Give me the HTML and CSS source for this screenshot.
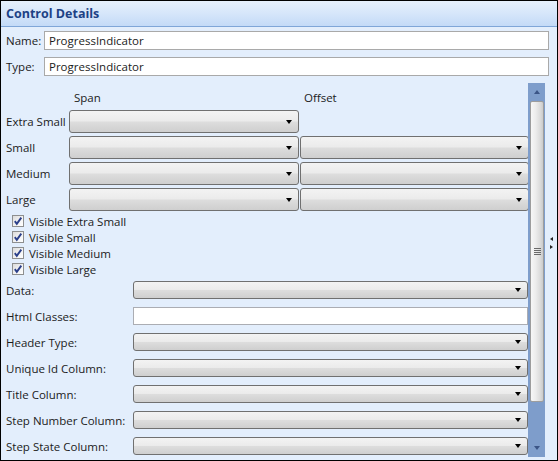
FILE: index.html
```html
<!DOCTYPE html>
<html>
<head>
<meta charset="utf-8">
<link rel="stylesheet" href="styles.css">
</head>
<body>
<div class="window">
  <div class="header"><span class="title">Control Details</span></div>
  <div class="top">
    <div class="trow"><span class="tlabel">Name:</span><div class="textbox">ProgressIndicator</div></div>
    <div class="trow"><span class="tlabel">Type:</span><div class="textbox">ProgressIndicator</div></div>
  </div>
  <div class="scrollarea">
    <div class="content">
      <div class="grid">
        <div class="colhead"></div><div class="colhead span">Span</div><div class="colhead off">Offset</div>
        <div class="glabel">Extra Small</div><div class="combo"><span class="arrow"></span></div><div></div>
        <div class="glabel">Small</div><div class="combo"><span class="arrow"></span></div><div class="combo"><span class="arrow"></span></div>
        <div class="glabel">Medium</div><div class="combo"><span class="arrow"></span></div><div class="combo"><span class="arrow"></span></div>
        <div class="glabel">Large</div><div class="combo"><span class="arrow"></span></div><div class="combo"><span class="arrow"></span></div>
      </div>
      <div class="checks">
        <div class="check"><span class="box"><svg width="12" height="12" viewBox="0 0 12 12"><path d="M2.8 6.2 L4.8 8.8 L9.3 2.6" fill="none" stroke="#2a3f8a" stroke-width="1.9"/></svg></span>Visible Extra Small</div>
        <div class="check"><span class="box"><svg width="12" height="12" viewBox="0 0 12 12"><path d="M2.8 6.2 L4.8 8.8 L9.3 2.6" fill="none" stroke="#2a3f8a" stroke-width="1.9"/></svg></span>Visible Small</div>
        <div class="check"><span class="box"><svg width="12" height="12" viewBox="0 0 12 12"><path d="M2.8 6.2 L4.8 8.8 L9.3 2.6" fill="none" stroke="#2a3f8a" stroke-width="1.9"/></svg></span>Visible Medium</div>
        <div class="check"><span class="box"><svg width="12" height="12" viewBox="0 0 12 12"><path d="M2.8 6.2 L4.8 8.8 L9.3 2.6" fill="none" stroke="#2a3f8a" stroke-width="1.9"/></svg></span>Visible Large</div>
      </div>
      <div class="form">
        <div class="frow"><span class="flabel">Data:</span><div class="combo small"><span class="arrow"></span></div></div>
        <div class="frow"><span class="flabel">Html Classes:</span><div class="textbox small"></div></div>
        <div class="frow"><span class="flabel">Header Type:</span><div class="combo small"><span class="arrow"></span></div></div>
        <div class="frow"><span class="flabel">Unique Id Column:</span><div class="combo small"><span class="arrow"></span></div></div>
        <div class="frow"><span class="flabel">Title Column:</span><div class="combo small"><span class="arrow"></span></div></div>
        <div class="frow"><span class="flabel">Step Number Column:</span><div class="combo small"><span class="arrow"></span></div></div>
        <div class="frow"><span class="flabel">Step State Column:</span><div class="combo small"><span class="arrow"></span></div></div>
      </div>
    </div>
    <div class="scrollbar">
      <div class="sbtn"><span class="uparrow"></span></div>
      <div class="thumb"><span class="grip"></span></div>
      <div class="strack"></div>
      <div class="sbtn"><span class="downarrow"></span></div>
    </div>
    <div class="side">
      <span class="sarrow left"></span>
      <span class="sarrow right"></span>
    </div>
  </div>
</div>
</body>
</html>
```

FILE: styles.css
```css
html, body {
  margin: 0;
  padding: 0;
  background: #ffffff;
}
body {
  font-family: "Open Sans", "Noto Sans", sans-serif;
  font-size: 11.5px;
  color: #1b1b1b;
}
.window {
  width: 558px;
  height: 461px;
  box-sizing: border-box;
  border: 1px solid #000;
  background: #e3eefc;
  display: flex;
  flex-direction: column;
}
.header {
  height: 25px;
  border-bottom: 1px solid #7fa6d8;
  background: linear-gradient(to bottom, #e6f0fc 0%, #d6e6fa 50%, #c3daf7 100%);
  display: flex;
  align-items: center;
  padding-left: 5px;
  flex: none;
}
.title {
  font-weight: bold;
  font-size: 12.5px;
  color: #1d4185;
}
.top {
  padding: 4px 8px 7px 5px;
  display: flex;
  flex-direction: column;
  gap: 7px;
  flex: none;
}
.trow {
  display: flex;
  align-items: center;
  height: 19px;
}
.tlabel {
  width: 38px;
}
.textbox {
  flex: 1;
  height: 19px;
  box-sizing: border-box;
  border: 1px solid #a9a9a9;
  background: #fff;
  padding-left: 4px;
  line-height: 17px;
}
.textbox.small {
  height: 18px;
  border-color: #abadb3;
}
.scrollarea {
  height: 374px;
  display: flex;
  flex: none;
}
.content {
  width: 527px;
  box-sizing: border-box;
  padding-left: 5px;
  flex: none;
}
.grid {
  display: grid;
  grid-template-columns: 62px 230px 229px;
  grid-template-rows: 24px 23px 23px 23px 23px;
  column-gap: 1px;
  row-gap: 3px;
}
.grid > .colhead {
  display: flex;
  align-items: center;
  padding-top: 4px;
  box-sizing: border-box;
}
.colhead.span { padding-left: 5px; }
.colhead.off { padding-left: 4px; }
.glabel {
  display: flex;
  align-items: center;
}
.combo {
  box-sizing: border-box;
  border: 1px solid #707070;
  border-radius: 3px;
  background: linear-gradient(to bottom, #f3f3f3 0%, #ebebeb 48%, #dddddd 52%, #cfcfcf 100%);
  display: flex;
  align-items: center;
  justify-content: flex-end;
  padding-right: 6px;
}
.combo.small {
  height: 18px;
  flex: 1;
}
.arrow {
  width: 0;
  height: 0;
  border-left: 3.5px solid transparent;
  border-right: 3.5px solid transparent;
  border-top: 4px solid #000;
}
.checks {
  margin-top: 2px;
  padding-left: 6px;
  display: flex;
  flex-direction: column;
}
.check {
  height: 16px;
  display: flex;
  align-items: center;
}
.box {
  width: 12px;
  height: 12px;
  box-sizing: border-box;
  border: 1px solid #8e8f8f;
  background: linear-gradient(135deg, #dcdcdc 0%, #f4f4f4 60%, #ffffff 100%);
  margin-right: 5px;
  position: relative;
  flex: none;
}
.box svg {
  position: absolute;
  left: -1px;
  top: -1px;
}
.form {
  margin-top: 4px;
  display: flex;
  flex-direction: column;
  gap: 8px;
}
.frow {
  display: flex;
  align-items: center;
  height: 18px;
}
.flabel {
  width: 127px;
  flex: none;
}
.scrollbar {
  width: 17px;
  flex: none;
  background: #7e9dcb;
  display: flex;
  flex-direction: column;
}
.sbtn {
  height: 18px;
  display: flex;
  align-items: center;
  justify-content: center;
  flex: none;
}
.uparrow {
  width: 0; height: 0;
  border-left: 3.5px solid transparent;
  border-right: 3.5px solid transparent;
  border-bottom: 4px solid #3b5587;
}
.downarrow {
  width: 0; height: 0;
  border-left: 3.5px solid transparent;
  border-right: 3.5px solid transparent;
  border-top: 4px solid #3b5587;
}
.thumb {
  height: 301px;
  margin: 0 1px 0 2px;
  box-sizing: border-box;
  border: 1px solid #9d9d9d;
  border-radius: 2px;
  background: linear-gradient(to right, #f7f7f7 0%, #ececec 40%, #dcdcdc 75%, #cbcbcb 100%);
  display: flex;
  align-items: center;
  justify-content: center;
  flex: none;
}
.grip {
  width: 7px;
  height: 7px;
  background: repeating-linear-gradient(to bottom, #6a6a6a 0, #6a6a6a 1px, transparent 1px, transparent 2px);
}
.strack {
  flex: 1;
}
.side {
  width: 12px;
  flex: none;
  display: flex;
  flex-direction: column;
  align-items: center;
  padding-top: 154px;
  gap: 4px;
  box-sizing: border-box;
}
.sarrow {
  width: 0; height: 0;
  border-top: 2.5px solid transparent;
  border-bottom: 2.5px solid transparent;
}
.sarrow.left { border-right: 3px solid #222; margin-left: 1px; }
.sarrow.right { border-left: 3px solid #222; margin-left: 1px; }
```
